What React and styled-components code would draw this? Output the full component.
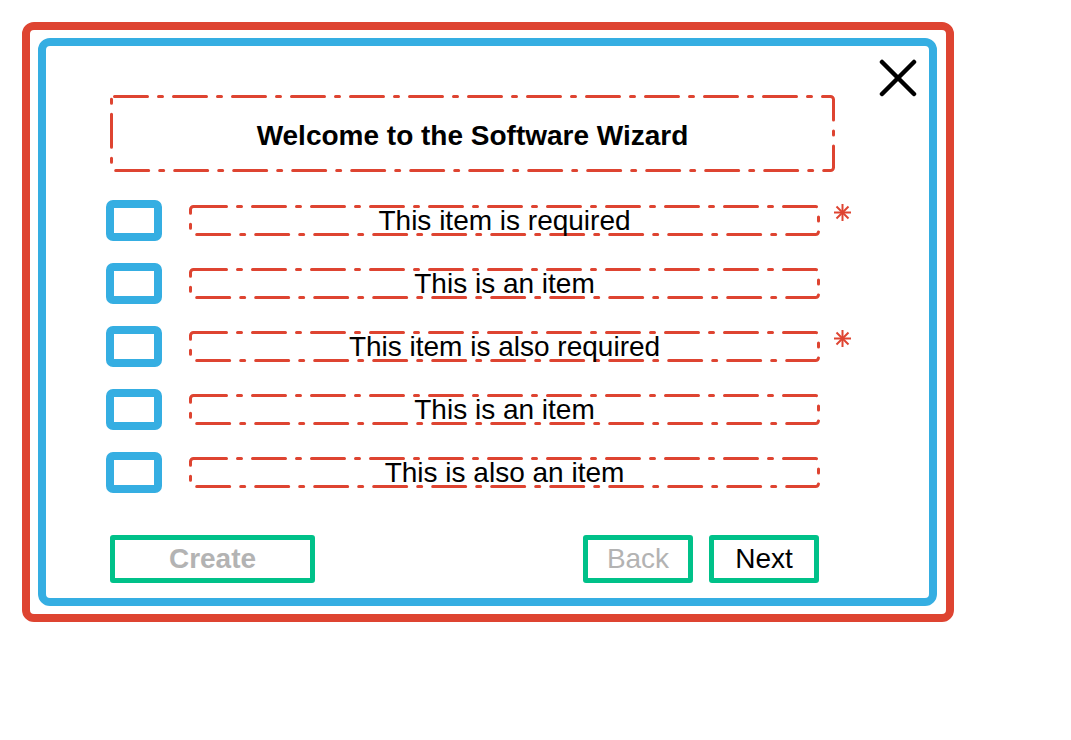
import React from "react";
import styled, { createGlobalStyle } from "styled-components";

const RED = "#de4431";
const BLUE = "#35aee2";
const GREEN = "#00c189";
const GRAY = "#b3b3b3";

const GlobalStyle = createGlobalStyle`
  html, body {
    margin: 0;
    padding: 0;
    background: #ffffff;
    font-family: "Liberation Sans", Arial, sans-serif;
  }
  * { box-sizing: border-box; }
`;

const Page = styled.div`
  padding: 22px 0 0 22px;
  width: 1071px;
  height: 740px;
`;

const OuterFrame = styled.div`
  width: 932px;
  height: 600px;
  border: 8px solid ${RED};
  border-radius: 12px;
  padding: 8px 9px 8px 8px;
`;

const InnerFrame = styled.div`
  position: relative;
  width: 899px;
  height: 568px;
  border: 8px solid ${BLUE};
  border-radius: 12px;
  padding: 49px 0 0 60px;
  display: flex;
  flex-direction: column;
`;

const CloseButton = styled.button`
  position: absolute;
  top: 13px;
  right: 12px;
  width: 38px;
  height: 38px;
  padding: 0;
  border: none;
  background: transparent;
  display: block;
  cursor: pointer;
`;

const DashWrap = styled.div`
  position: relative;
  flex: none;
  width: ${(p) => p.$w}px;
  height: ${(p) => p.$h}px;
  margin-left: ${(p) => p.$ml || 0}px;
  display: flex;
  align-items: center;
  justify-content: center;
  color: #000;
  font-size: 28px;
  line-height: 32px;
  font-weight: ${(p) => (p.$bold ? 700 : 400)};
  white-space: nowrap;
`;

const DashSvg = styled.svg`
  position: absolute;
  left: 0;
  top: 0;
  pointer-events: none;
`;

const DashLabel = styled.span`
  position: relative;
  top: ${(p) => p.$dy || 0}px;
`;

function DashBox({ w, h, ml, bold, dy, children }) {
  return (
    <DashWrap $w={w} $h={h} $ml={ml} $bold={bold}>
      <DashSvg width={w} height={h}>
        <rect
          x="1.5"
          y="1.5"
          width={w - 3}
          height={h - 3}
          rx="3"
          fill="none"
          stroke={RED}
          strokeWidth="3"
          strokeLinecap="round"
          strokeDasharray="33 11 4 11"
        />
      </DashSvg>
      <DashLabel $dy={dy}>{children}</DashLabel>
    </DashWrap>
  );
}

const List = styled.div`
  margin-top: 28px;
  display: flex;
  flex-direction: column;
  gap: 22px;
`;

const Row = styled.div`
  display: flex;
  align-items: center;
  height: 41px;
`;

const Checkbox = styled.div`
  flex: none;
  width: 56px;
  height: 41px;
  border: 8px solid ${BLUE};
  border-radius: 7px;
`;

const Asterisk = styled.svg`
  flex: none;
  align-self: flex-start;
  margin-top: 3px;
  margin-left: 13px;
`;

const Footer = styled.div`
  margin-top: 42px;
  margin-left: 4px;
  width: 709px;
  display: flex;
  align-items: center;
`;

const Spacer = styled.div`
  flex: 1;
`;

const Button = styled.button`
  flex: none;
  width: ${(p) => p.$w}px;
  height: 48px;
  margin-left: ${(p) => p.$ml || 0}px;
  border: 5px solid ${GREEN};
  border-radius: 3px;
  background: #fff;
  padding: 0;
  font-family: "Liberation Sans", Arial, sans-serif;
  font-size: 28px;
  font-weight: ${(p) => (p.$bold ? 700 : 400)};
  color: ${(p) => (p.$disabled ? GRAY : "#000")};
  display: flex;
  align-items: center;
  justify-content: center;
`;

function Star() {
  return (
    <Asterisk width="19" height="19" viewBox="0 0 19 19">
      <g stroke={RED} strokeWidth="2" strokeLinecap="butt">
        <line x1="9.5" y1="1" x2="9.5" y2="18" />
        <line x1="1" y1="9.5" x2="18" y2="9.5" />
        <line x1="3.5" y1="3.5" x2="15.5" y2="15.5" />
        <line x1="15.5" y1="3.5" x2="3.5" y2="15.5" />
      </g>
    </Asterisk>
  );
}

const items = [
  { text: "This item is required", required: true },
  { text: "This is an item", required: false },
  { text: "This item is also required", required: true },
  { text: "This is an item", required: false },
  { text: "This is also an item", required: false },
];

export default function App() {
  return (
    <>
      <GlobalStyle />
      <Page>
        <OuterFrame>
          <InnerFrame>
            <CloseButton aria-label="Close">
              <svg width="38" height="38" viewBox="0 0 38 38">
                <g stroke="#000" strokeWidth="4.5" strokeLinecap="round">
                  <line x1="3" y1="3" x2="35" y2="35" />
                  <line x1="35" y1="3" x2="3" y2="35" />
                </g>
              </svg>
            </CloseButton>
            <DashBox w={725} h={77} ml={4} bold dy={2}>
              Welcome to the Software Wizard
            </DashBox>
            <List>
              {items.map((it, i) => (
                <Row key={i}>
                  <Checkbox />
                  <DashBox w={631} h={31} ml={27}>
                    {it.text}
                  </DashBox>
                  {it.required && <Star />}
                </Row>
              ))}
            </List>
            <Footer>
              <Button $w={205} $bold $disabled>
                Create
              </Button>
              <Spacer />
              <Button $w={110} $disabled>
                Back
              </Button>
              <Button $w={110} $ml={16}>
                Next
              </Button>
            </Footer>
          </InnerFrame>
        </OuterFrame>
      </Page>
    </>
  );
}
